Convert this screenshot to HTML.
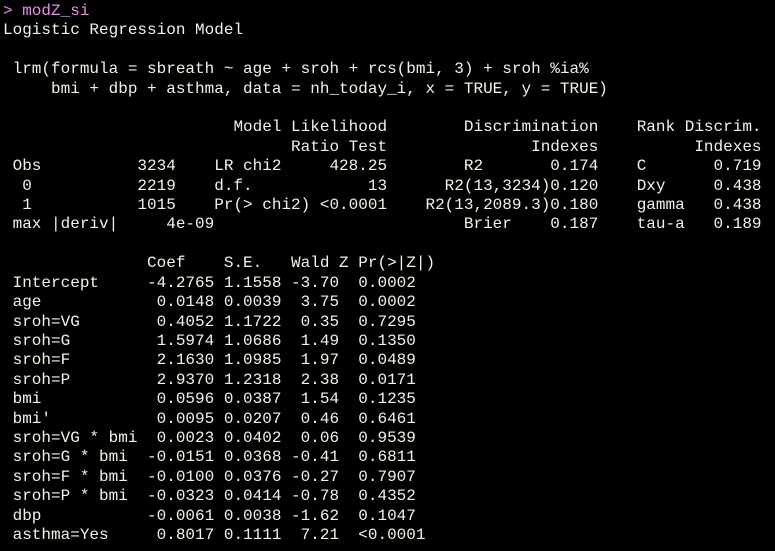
<!DOCTYPE html>
<html><head><meta charset="utf-8"><style>
html,body{margin:0;padding:0;background:#000;width:775px;height:551px;overflow:hidden}
pre{margin:0;position:absolute;left:3px;top:2px;font-family:"Liberation Mono",monospace;font-size:16px;line-height:19.4px;color:#f2f2e6;white-space:pre}
.p{color:#e88ce8}
</style></head><body><pre><span class="p">&gt; modZ_si</span>
Logistic Regression Model

 lrm(formula = sbreath ~ age + sroh + rcs(bmi, 3) + sroh %ia%
     bmi + dbp + asthma, data = nh_today_i, x = TRUE, y = TRUE)

                        Model Likelihood        Discrimination    Rank Discrim.
                              Ratio Test               Indexes          Indexes
 Obs          3234    LR chi2     428.25        R2       0.174    C       0.719
  0           2219    d.f.            13      R2(13,3234)0.120    Dxy     0.438
  1           1015    Pr(&gt; chi2) &lt;0.0001    R2(13,2089.3)0.180    gamma   0.438
 max |deriv|     4e-09                          Brier    0.187    tau-a   0.189

               Coef    S.E.   Wald Z Pr(&gt;|Z|)
 Intercept     -4.2765 1.1558 -3.70  0.0002
 age            0.0148 0.0039  3.75  0.0002
 sroh=VG        0.4052 1.1722  0.35  0.7295
 sroh=G         1.5974 1.0686  1.49  0.1350
 sroh=F         2.1630 1.0985  1.97  0.0489
 sroh=P         2.9370 1.2318  2.38  0.0171
 bmi            0.0596 0.0387  1.54  0.1235
 bmi'           0.0095 0.0207  0.46  0.6461
 sroh=VG * bmi  0.0023 0.0402  0.06  0.9539
 sroh=G * bmi  -0.0151 0.0368 -0.41  0.6811
 sroh=F * bmi  -0.0100 0.0376 -0.27  0.7907
 sroh=P * bmi  -0.0323 0.0414 -0.78  0.4352
 dbp           -0.0061 0.0038 -1.62  0.1047
 asthma=Yes     0.8017 0.1111  7.21  &lt;0.0001</pre></body></html>
